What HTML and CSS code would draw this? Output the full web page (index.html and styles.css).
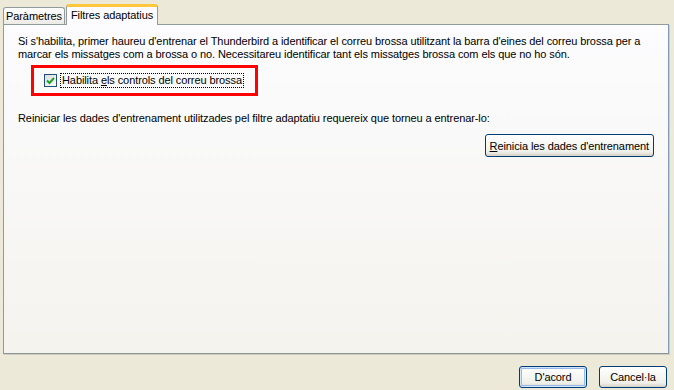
FILE: index.html
```html
<!DOCTYPE html>
<html lang="ca">
<head>
    <meta charset="UTF-8">
    <title>Filtres adaptatius</title>
    <link rel="stylesheet" href="styles.css">
</head>
<body>
    <div class="dialog">
        <div class="tabs">
            <div class="tab">Paràmetres</div>
            <div class="tab active">Filtres adaptatius</div>
        </div>
        <div class="panel">
            <p class="desc">Si s'habilita, primer haureu d'entrenar el Thunderbird a identificar el correu brossa utilitzant la barra d'eines del correu brossa per a marcar els missatges com a brossa o no. Necessitareu identificar tant els missatges brossa com els que no ho són.</p>
            <div class="highlight">
                <label class="check">
                    <span class="box">
                        <svg width="9" height="9" viewBox="0 0 9 9"><path d="M1 4.5 L3.5 7 L8 2" fill="none" stroke="#21a121" stroke-width="2"/></svg>
                    </span>
                    <span class="focus">Habilita <u>e</u>ls controls del correu brossa</span>
                </label>
            </div>
            <p class="reset-text">Reiniciar les dades d'entrenament utilitzades pel filtre adaptatiu requereix que torneu a entrenar-lo:</p>
            <div class="reset-row">
                <button class="btn"><u>R</u>einicia les dades d'entrenament</button>
            </div>
        </div>
        <div class="footer">
            <button class="btn default">D'acord</button>
            <button class="btn">Cancel·la</button>
        </div>
    </div>
</body>
</html>
```

FILE: styles.css
```css
body {
    margin: 0;
    background: #ece9d8;
    font-family: "Liberation Sans", Arial, sans-serif;
    font-size: 11px;
    letter-spacing: -0.09px;
    color: #000;
}
.dialog {
    width: 666px;
    height: 390px;
    padding: 4px 5px 0 3px;
    display: flex;
    flex-direction: column;
}
.tabs {
    display: flex;
    align-items: flex-end;
    height: 20px;
    position: relative;
    z-index: 1;
}
.tab {
    height: 15px;
    padding: 1px 2px 0 2px;
    border: 1px solid #919b9c;
    border-bottom: none;
    border-radius: 3px 3px 0 0;
    background: linear-gradient(#ffffff, #ecebe6);
    line-height: 15px;
}
.tab.active {
    height: 18px;
    margin-bottom: -1px;
    padding: 0 4px;
    border-top: 3px solid #ffc83c;
    background: #fcfcfe;
    line-height: 17px;
    margin-left: 1px;
}
.panel {
    height: 328px;
    border: 1px solid #919b9c;
    border-right-color: #7f9db9;
    border-bottom-color: #8c9596;
    box-shadow: 1px 1px 0 #d0cdc0;
    background: linear-gradient(#fcfcfe, #f4f3ee);
    padding: 0 0 0 14px;
}
.desc {
    margin: 10px 0 0 0;
    line-height: 13px;
    width: 640px;
}
.highlight {
    margin: 4px 0 0 13px;
    width: 221px;
    height: 25px;
    border: 3px solid #ff0000;
    display: flex;
    align-items: center;
}
.check {
    display: flex;
    align-items: center;
    margin-left: 10px;
}
.box {
    width: 11px;
    height: 11px;
    border: 1px solid #1c5180;
    background: linear-gradient(135deg, #dcdcd7, #ffffff);
    display: flex;
    align-items: center;
    justify-content: center;
}
.focus {
    margin-left: 3px;
    padding: 0 1px;
    border: 1px dotted #000;
    line-height: 13px;
}
.reset-text {
    margin: 16px 0 0 0;
    line-height: 13px;
}
.reset-row {
    display: flex;
    justify-content: flex-end;
    margin: 9px 14px 0 0;
}
.btn {
    font-family: "Liberation Sans", Arial, sans-serif;
    font-size: 11px;
    letter-spacing: -0.09px;
    height: 23px;
    min-width: 75px;
    padding: 0 4px;
    border: 1px solid #003c74;
    border-radius: 3px;
    background: linear-gradient(#ffffff, #f0f0ea 80%, #d6d0c5);
    color: #000;
}
.btn.default {
    box-shadow: inset 0 0 0 1px #cee7ff, inset 0 0 0 2px #98b8ea;
}
.footer {
    display: flex;
    justify-content: flex-end;
    gap: 12px;
    margin-top: 12px;
    padding-right: 2px;
}
.footer .btn {
    width: 68px;
    min-width: 0;
    height: 22px;
}
```
